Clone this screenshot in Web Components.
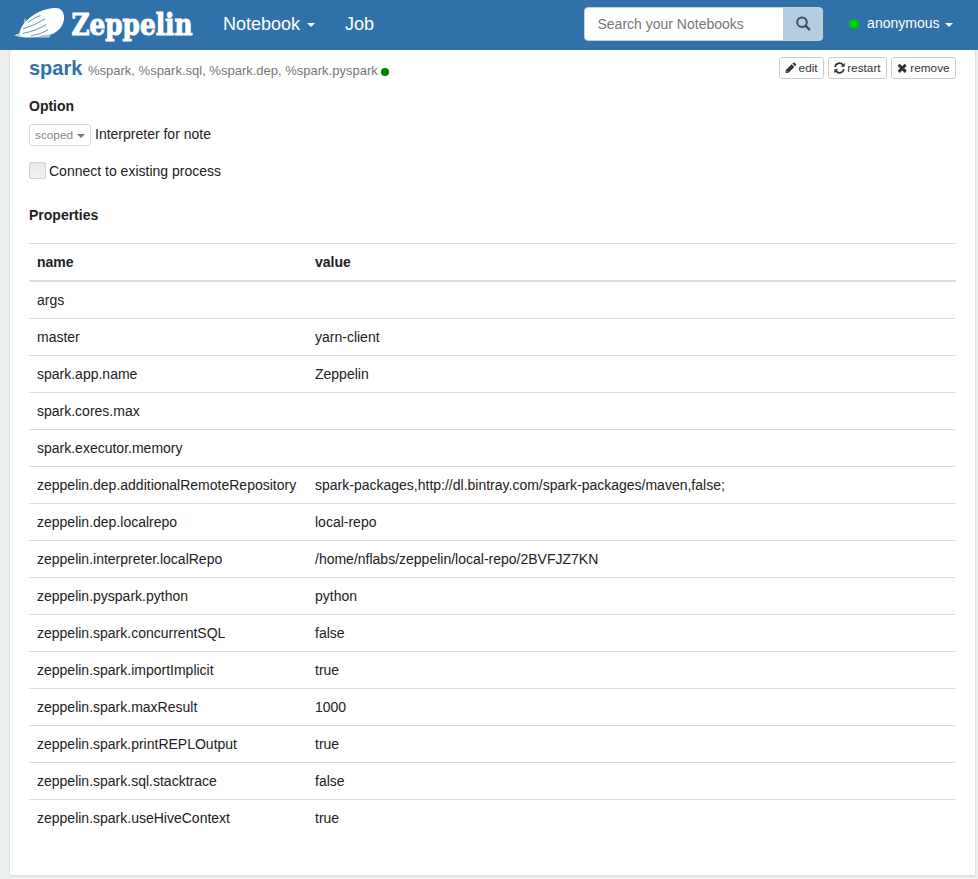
<!DOCTYPE html>
<html lang="en">
<head>
<meta charset="utf-8">
<title>Zeppelin</title>
<style>
body{margin:0;width:978px;height:879px;overflow:hidden;background:#ecf0f1;font:14px/20px "Liberation Sans",Arial,sans-serif;color:#212121}
</style>
</head>
<body>
<zep-navbar></zep-navbar>
<interpreter-card></interpreter-card>
<script>
class Base extends HTMLElement{
  constructor(){super();this.attachShadow({mode:'open'}).innerHTML=this.view();}
}
customElements.define('caret-down',class extends Base{view(){return `
<style>:host{display:inline-block;width:0;height:0;border-top:4px solid currentColor;border-left:4px solid transparent;border-right:4px solid transparent}</style>`}});

customElements.define('zep-logo',class extends Base{view(){return `
<style>:host{display:block;width:195px;height:50px}svg{display:block;overflow:visible}text{font:bold 29.5px "DejaVu Serif",serif;font-stretch:condensed}</style>
<svg width="195" height="50" viewBox="0 0 195 50">
<path d="M14 35.4L19.5 33 23 37.5 17 36.3Z" fill="#bcd4e8"/>
<path d="M24.3 18.5L26 19 27 24 23.5 25Z" fill="#8fb4d4"/>
<path d="M19.7 33C20 28 24 22.5 30 17.5C38 11 49 7.5 56 8C62 8.3 64.5 13 64 19C63.5 26 58 32 51 34.6C46 36.5 38 37.5 30 37.6C24 37.7 19.4 37.4 19.7 33Z" fill="#fff"/>
<path d="M39 35.8L51 34.3 49.5 37.6 38 37.8Z" fill="#a9c5de"/>
<path d="M28 22.5Q33 18 40.5 15.5M23 28.8Q35 25.5 45 18.8M22.5 33.5Q37 30.5 46.5 24.5M31 36Q41 34 48 30" fill="none" stroke="#5088b8" stroke-width=".9"/>
<text x="71.5" y="34.5" textLength="121" lengthAdjust="spacingAndGlyphs" fill="#fff" stroke="#fff" stroke-width="1">Zeppelin</text>
</svg>`}});

customElements.define('nav-link',class extends Base{view(){return `
<style>:host{display:flex;align-items:center;gap:7px;color:#fff;font-size:18px;line-height:20px;white-space:nowrap}</style><slot></slot>`}});

customElements.define('search-box',class extends Base{view(){return `
<style>:host{display:flex;box-sizing:border-box;width:239px;height:34px;border:1px solid #ccc;border-radius:4px;background:#fff;overflow:hidden}
.q{flex:1;padding:6px 12px 0 12.4px;color:#777}.b{width:39px;background:#b5cbe0;display:grid;place-items:center}</style>
<div class="q">Search your Notebooks</div><div class="b"><svg width="16" height="16" viewBox="0 0 16 16" fill="none" stroke="#34526d"><circle cx="7" cy="6.2" r="4.8" stroke-width="2"/><path d="M10.7 9.9L14.2 13.4" stroke-width="2.4" stroke-linecap="round"/></svg></div>`}});

customElements.define('zep-navbar',class extends Base{view(){return `
<style>:host{display:flex;height:50px;background:#3071a9;align-items:center}
.n{margin:0 0 3px 28px}.j{margin:0 0 3px 30px}search-box{margin:-2px 0 0 210px}
.u{font-size:14px;margin:-4px 0 0 26px;gap:6px}.dot{width:10px;height:10px;border-radius:50%;background:#00cc00;margin:2px 2px 0 0}.u caret-down{margin-top:4px}.n caret-down{margin-top:2px}</style>
<zep-logo></zep-logo><nav-link class="n"><span>Notebook</span><caret-down></caret-down></nav-link><nav-link class="j">Job</nav-link>
<search-box></search-box><nav-link class="u"><span class="dot"></span><span>anonymous</span><caret-down></caret-down></nav-link>`}});

const icons={
edit:'<path d="M.8 8.1L6.7 2.2 9.4 4.9 3.5 10.8.5 11.1ZM7.4 1.5L8.3.7Q9 .2 9.7.8L10.8 1.9Q11.4 2.6 10.8 3.3L10 4.2Z"/><path d="M1.5 8.8L2.8 10.1" stroke="#fff" stroke-width=".6"/>',
restart:'<path d="M1.1 5A4.4 4.4 0 0 1 9 3M9.9 7A4.4 4.4 0 0 1 2 9" fill="none" stroke="#333" stroke-width="1.7"/><path d="M10.7.8V4.8H6.7ZM.3 11.2V7.2H4.3Z"/>',
remove:'<path d="M2.7 1.7L5.2 4.2 7.7 1.7 9.8 3.8 7.3 6.3 9.8 8.8 7.7 10.9 5.2 8.4 2.7 10.9.6 8.8 3.1 6.3.6 3.8Z"/>'};
customElements.define('tool-button',class extends HTMLElement{
connectedCallback(){this.attachShadow({mode:'open'}).innerHTML=`
<style>:host{display:flex;align-items:center;box-sizing:border-box;height:22px;border:1px solid #ccc;border-radius:3px;padding:0 5.4px 0 4.5px;gap:2px;background:#fff;color:#333;font-size:11.8px;line-height:18px;white-space:nowrap}svg{display:block;flex:none}span{flex:1;text-align:right}</style>
<svg width="11" height="12" viewBox="0 0 11 12" fill="#333">${icons[this.getAttribute('icon')]}</svg><span><slot></slot></span>`}});

customElements.define('mode-select',class extends Base{view(){return `
<style>:host{display:flex;box-sizing:border-box;width:62px;height:22px;border:1px solid #d9d9d9;border-radius:3px;padding:0 5px;align-items:center;justify-content:space-between;font-size:11.8px;line-height:18px;color:#888}caret-down{color:#777;margin-top:2px}</style><slot></slot><caret-down></caret-down>`}});

customElements.define('check-option',class extends Base{view(){return `
<style>:host{display:flex;align-items:center;gap:3px;height:20px}i{box-sizing:border-box;width:17px;height:17px;border:1px solid #d1d1d1;border-radius:2px;background:linear-gradient(#e8e8e8,#f1f1f1);margin-top:-1px}</style><i></i><slot></slot>`}});

const rows=[['args',''],['master','yarn-client'],['spark.app.name','Zeppelin'],['spark.cores.max',''],['spark.executor.memory',''],
['zeppelin.dep.additionalRemoteRepository','spark-packages,http://dl.bintray.com/spark-packages/maven,false;'],
['zeppelin.dep.localrepo','local-repo'],['zeppelin.interpreter.localRepo','/home/nflabs/zeppelin/local-repo/2BVFJZ7KN'],
['zeppelin.pyspark.python','python'],['zeppelin.spark.concurrentSQL','false'],['zeppelin.spark.importImplicit','true'],
['zeppelin.spark.maxResult','1000'],['zeppelin.spark.printREPLOutput','true'],['zeppelin.spark.sql.stacktrace','false'],['zeppelin.spark.useHiveContext','true']];
customElements.define('property-table',class extends Base{view(){return `
<style>:host{display:block}.r{display:grid;grid-template-columns:278px 1fr;border-top:1px solid #ddd}.r>*{padding:8px;height:20px}.h{font-weight:bold;border-bottom:1px solid #ddd}</style>
<div class="r h"><span>name</span><span>value</span></div>${rows.map(r=>`<div class="r"><span>${r[0]}</span><span>${r[1]}</span></div>`).join('')}`}});

customElements.define('interpreter-card',class extends Base{view(){return `
<style>:host{display:block;box-sizing:border-box;width:967px;height:827px;margin-left:9px;padding:7px 19px 0;background:#fff;border:1px solid #e0e3e4;border-top:0;border-bottom:2px solid #e1e2e2;border-radius:0 0 3px 3px}
header{display:flex;align-items:flex-start;height:39px}
h3{margin:0;font-size:20px;line-height:23px;color:#3071a9;width:59px}
.alias{font-size:13px;line-height:18px;color:#777;padding-top:5px;white-space:nowrap}
.dot{width:8px;height:8px;border-radius:50%;background:green;margin:11px 0 0 3px}
nav{display:flex;gap:4px;margin-left:auto}.e{width:45px}.s{width:59px}.m{width:65px}
h5{margin:0;font-size:14px;line-height:20px;font-weight:bold}
.mode{display:flex;gap:4px;margin:8px 0 15px;height:22px}check-option{margin-bottom:24px}property-table{margin-top:18px}.mode span{line-height:20px}</style>
<header><h3>spark</h3><span class="alias">%spark, %spark.sql, %spark.dep, %spark.pyspark</span><i class="dot"></i>
<nav><tool-button class="e" icon="edit">edit</tool-button><tool-button class="s" icon="restart">restart</tool-button><tool-button class="m" icon="remove">remove</tool-button></nav></header>
<h5>Option</h5><div class="mode"><mode-select>scoped</mode-select><span>Interpreter for note</span></div>
<check-option>Connect to existing process</check-option><h5>Properties</h5><property-table></property-table>`}});
</script>
</body>
</html>
